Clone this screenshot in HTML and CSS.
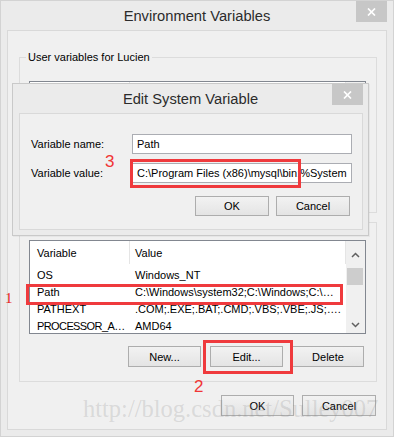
FILE: index.html
```html
<!DOCTYPE html>
<html lang="en">
<head>
    <meta charset="UTF-8">
    <title>Environment Variables</title>
    <link rel="stylesheet" href="styles.css">
</head>
<body>
    <div class="window">
        <div class="titlebar">
            <span class="title">Environment Variables</span>
            <span class="close">
                <svg width="9" height="8" viewBox="0 0 9 8"><path d="M1 0.5 L8 7.5 M8 0.5 L1 7.5" stroke="#fff" stroke-width="1.7"/></svg>
            </span>
        </div>
        <div class="panel">
            <fieldset class="group group-user">
                <legend>User variables for Lucien</legend>
                <div class="list">
                    <div class="list-body">
                        <div class="list-head">
                            <span class="col-name"></span>
                            <span class="col-value"></span>
                        </div>
                    </div>
                    <div class="scrollbar"></div>
                </div>
            </fieldset>

            <fieldset class="group group-system">
                <legend>System variables</legend>
                <div class="list">
                    <div class="list-body">
                        <div class="list-head">
                            <span class="col-name">Variable</span>
                            <span class="col-value">Value</span>
                        </div>
                        <div class="list-rows">
                            <div class="row"><span class="col-name">OS</span><span class="col-value">Windows_NT</span></div>
                            <div class="row"><span class="col-name">Path</span><span class="col-value">C:\Windows\system32;C:\Windows;C:\…</span></div>
                            <div class="row"><span class="col-name">PATHEXT</span><span class="col-value">.COM;.EXE;.BAT;.CMD;.VBS;.VBE;.JS;….</span></div>
                            <div class="row"><span class="col-name tight">PROCESSOR_A…</span><span class="col-value">AMD64</span></div>
                        </div>
                    </div>
                    <div class="scrollbar">
                        <span class="arrow">
                            <svg width="9" height="6" viewBox="0 0 9 6"><path d="M1 5 L4.5 1.5 L8 5" fill="none" stroke="#606060" stroke-width="1.5"/></svg>
                        </span>
                        <span class="thumb"></span>
                        <span class="spacer"></span>
                        <span class="arrow">
                            <svg width="9" height="6" viewBox="0 0 9 6"><path d="M1 1 L4.5 4.5 L8 1" fill="none" stroke="#606060" stroke-width="1.5"/></svg>
                        </span>
                    </div>
                </div>
                <div class="button-row">
                    <button class="btn">New...</button>
                    <button class="btn">Edit...</button>
                    <button class="btn btn-narrow">Delete</button>
                </div>
            </fieldset>

            <div class="button-row main-buttons">
                <button class="btn">OK</button>
                <button class="btn btn-wide">Cancel</button>
            </div>
        </div>
    </div>

    <div class="dialog">
        <div class="titlebar dialog-titlebar">
            <span class="title">Edit System Variable</span>
            <span class="close">
                <svg width="9" height="8" viewBox="0 0 9 8"><path d="M1 0.5 L8 7.5 M8 0.5 L1 7.5" stroke="#fff" stroke-width="1.7"/></svg>
            </span>
        </div>
        <div class="dialog-panel">
            <div class="form">
                <label for="varName">Variable name:</label>
                <input type="text" id="varName" class="field" value="Path">
                <label for="varValue">Variable value:</label>
                <input type="text" id="varValue" class="field" value="C:\Program Files (x86)\mysql\bin;%SystemRoot%\system32;%SystemRoot%">
            </div>
            <div class="button-row dialog-buttons">
                <button class="btn btn-wide">OK</button>
                <button class="btn btn-wide">Cancel</button>
            </div>
        </div>
    </div>

    <!-- red annotations drawn on top of the screenshot -->
    <div class="mark mark-value"></div>
    <div class="mark mark-path"></div>
    <div class="mark mark-edit"></div>
    <span class="step step-3">3</span>
    <span class="step step-1">1</span>
    <span class="step step-2">2</span>

    <div class="watermark">http://blog.csdn.net/Sulley007</div>
</body>
</html>
```

FILE: styles.css
```css
body {
    margin: 0;
    font-family: "Liberation Sans", Arial, sans-serif;
    font-size: 11px;
    color: #000;
    background: #ebebeb;
}
.window {
    position: relative;
    width: 394px;
    height: 437px;
    box-sizing: border-box;
    border: 1px solid #d3d3d3;
    background: #ebebeb;
}
.titlebar {
    position: relative;
    height: 29px;
    display: flex;
    align-items: center;
    justify-content: center;
}
.title {
    font-size: 14.7px;
    color: #2b2b2b;
}
.close {
    position: absolute;
    top: 0;
    right: 6px;
    width: 31px;
    height: 21px;
    background: #c7c7c7;
    display: flex;
    align-items: center;
    justify-content: center;
}
.panel {
    margin: 0 6px;
    height: 400px;
    box-sizing: border-box;
    border: 1px solid #d9d9d9;
    background: #f0f0f0;
}
.group {
    width: 358px;
    box-sizing: border-box;
    margin: 0 0 0 11px;
    padding: 17px 10px 14px 9px;
    border: 1px solid #dcdcdc;
    min-width: 0;
}
.group legend {
    margin-left: -3px;
    padding: 0 2px;
    line-height: 14px;
    font-size: 11px;
}
.group-user {
    margin-top: 19px;
    height: 163px;
    padding-bottom: 0;
}
.group-system {
    margin-top: 2px;
    padding-top: 11px;
}
.list {
    height: 94px;
    box-sizing: border-box;
    border: 1px solid #828790;
    background: #fff;
    display: flex;
}
.list-body {
    flex: 1;
    overflow: hidden;
}
.list-head {
    display: flex;
    height: 24px;
    line-height: 24px;
}
.list-head .col-name {
    border-right: 1px solid #e5e5e5;
    height: 23px;
}
.list-head .col-value {
    border-right: 1px solid #e5e5e5;
    height: 23px;
}
.col-name {
    width: 92px;
    padding-left: 7px;
    white-space: nowrap;
    overflow: hidden;
}
.col-name.tight {
    letter-spacing: -0.6px;
}
.col-value {
    flex: 1;
    padding-left: 5px;
    white-space: nowrap;
    overflow: hidden;
}
.list-rows {
    padding-top: 2px;
}
.row {
    display: flex;
    height: 17px;
    line-height: 17px;
}
.row .col-name {
    border-right: 1px solid transparent;
}
.scrollbar {
    width: 19px;
    background: #f0f0f0;
    display: flex;
    flex-direction: column;
    align-items: center;
}
.arrow {
    height: 17px;
    display: flex;
    align-items: center;
    justify-content: center;
}
.arrow:first-child {
    margin-top: 5px;
}
.thumb {
    align-self: stretch;
    margin: 5px 2px 0 1px;
    height: 17px;
    background: #cdcdcd;
}
.spacer {
    flex: 1;
}
.button-row {
    display: flex;
    justify-content: flex-end;
    gap: 9px;
    margin-top: 12px;
    padding-right: 2px;
}
.btn {
    width: 73px;
    height: 21px;
    padding: 0;
    font-family: "Liberation Sans", Arial, sans-serif;
    font-size: 11px;
    color: #000;
    border: 1px solid #adadad;
    background: linear-gradient(#f2f2f2, #e4e4e4);
}
.btn-narrow {
    width: 72px;
}
.btn-wide {
    width: 74px;
}
.main-buttons {
    margin-top: 13px;
    gap: 8px;
    padding-right: 10px;
}

/* Edit System Variable dialog floats over the main window */
.dialog {
    position: absolute;
    left: 12px;
    top: 83px;
    width: 357px;
    height: 153px;
    box-sizing: border-box;
    border: 1px solid #c9c9c9;
    background: #ebebeb;
    box-shadow: 1px 1px 0 rgba(0, 0, 0, 0.04);
}
.dialog-titlebar .close {
    right: 5px;
}
.dialog-panel {
    margin: 0 5px 0 6px;
    height: 117px;
    box-sizing: border-box;
    border: 1px solid #d9d9d9;
    background: #f0f0f0;
    padding: 20px 10px 0 11px;
}
.form {
    display: grid;
    grid-template-columns: 101px 220px;
    row-gap: 9px;
    align-items: center;
}
.field {
    height: 20px;
    box-sizing: border-box;
    margin: 0;
    padding: 0 4px;
    border: 1px solid #abadb3;
    font-family: "Liberation Sans", Arial, sans-serif;
    font-size: 11px;
    color: #000;
    background: #fff;
}
.dialog-buttons {
    margin-top: 13px;
    gap: 7px;
    height: 20px;
}
.dialog-buttons .btn {
    height: 20px;
}

.mark {
    position: absolute;
    box-sizing: border-box;
    border: 3px solid #ef3a3d;
}
.mark-value {
    left: 130px;
    top: 159px;
    width: 171px;
    height: 29px;
}
.mark-path {
    left: 26px;
    top: 284px;
    width: 317px;
    height: 21px;
}
.mark-edit {
    left: 203px;
    top: 340px;
    width: 90px;
    height: 34px;
}
.step {
    position: absolute;
    color: #f03535;
    font-family: "Liberation Sans", Arial, sans-serif;
    font-size: 17px;
    line-height: 17px;
}
.step-3 {
    left: 105px;
    top: 153px;
}
.step-2 {
    left: 194px;
    top: 378px;
}
.step-1 {
    left: 5px;
    top: 291px;
    font-family: "Liberation Serif", serif;
    font-size: 15px;
    line-height: 15px;
    color: #e81c1c;
}
.watermark {
    position: absolute;
    left: 83px;
    top: 396px;
    font-family: "Liberation Serif", serif;
    font-size: 24.5px;
    line-height: 25px;
    color: rgba(140, 140, 140, 0.24);
    white-space: nowrap;
    pointer-events: none;
}
```
